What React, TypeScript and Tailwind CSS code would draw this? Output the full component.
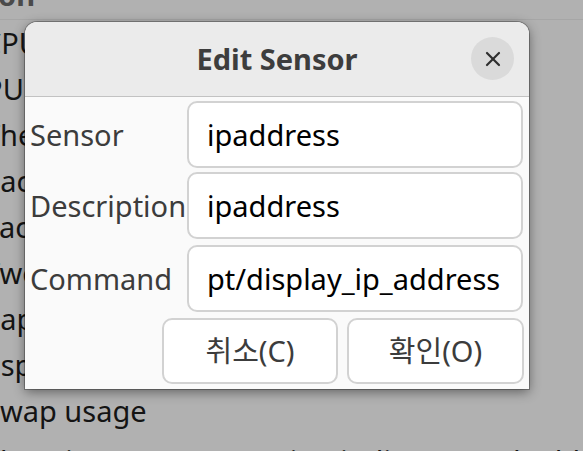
const rows = [
  { text: "CPU", cls: "-ml-[17px]" },
  { text: "GPU", cls: "-ml-[36px]" },
  { text: "Theme", cls: "-ml-[16px]" },
  { text: "Cache", cls: "-ml-[18px]" },
  { text: "Face", cls: "-ml-[16px]" },
  { text: "Two", cls: "-ml-[16px]" },
  { text: "Map", cls: "-ml-[26px]" },
  { text: "Disp", cls: "-ml-[28px]" },
  { text: "Swap usage", cls: "-ml-[16px]" },
  { text: "Show internet connection indicator and address", cls: "-ml-[16px] mt-[7px]" },
];

function Entry({ value }: { value: string }) {
  return (
    <div className="flex-1 h-full flex items-center rounded-[10px] border-2 border-[#d2d2d2] bg-white pl-[18px] pr-[12px] overflow-hidden">
      <span className="whitespace-nowrap text-black">{value}</span>
    </div>
  );
}

function FieldRow({ label, value, className }: { label: string; value: string; className?: string }) {
  return (
    <div className={`flex items-center h-[67px] ${className ?? ""}`}>
      <div className="w-[157px] shrink-0 text-[#3c3c3c] whitespace-nowrap">{label}</div>
      <Entry value={value} />
    </div>
  );
}

export default function App() {
  return (
    <div className="relative w-[583px] h-[451px] overflow-hidden bg-[#b1b1b1] text-[29px] font-['Noto_Sans','Noto_Sans_CJK_KR',sans-serif]">
      {/* background list behind the dialog */}
      <div className="h-[20px] border-b border-[#a6a6a6] overflow-hidden">
        <div className="w-[35px] flex justify-end -mt-[24px] leading-[38px]">
          <span className="font-bold text-[#4a4a4a] whitespace-nowrap">Description</span>
        </div>
      </div>
      {rows.map((r) => (
        <div key={r.text} className="h-[46px] flex items-center whitespace-nowrap text-[#141414]">
          <span className={r.cls}>{r.text}</span>
        </div>
      ))}

      {/* dialog */}
      <div className="absolute left-[25px] top-[22px] w-[504px] rounded-t-[12px] bg-[#fafafa] overflow-hidden shadow-[0_0_0_1px_rgba(0,0,0,0.28),0_3px_12px_rgba(0,0,0,0.45)]">
        <div className="relative h-[75px] bg-[#ebebeb] border-b border-[#c2c2c2] flex items-center justify-center">
          <span className="font-bold text-[#3d3d3d]">Edit Sensor</span>
          <button className="absolute right-[15px] top-[15px] w-[43px] h-[43px] rounded-full bg-[#dadada] flex items-center justify-center">
            <svg width="16" height="16" viewBox="0 0 16 16" fill="none" stroke="#2e2e2e" strokeWidth="2.2" strokeLinecap="round">
              <line x1="2" y1="2" x2="14" y2="14" />
              <line x1="14" y1="2" x2="2" y2="14" />
            </svg>
          </button>
        </div>

        <div className="flex flex-col pt-[4px] pb-[5px] pl-[5px] pr-[6px]">
          <FieldRow label="Sensor" value="ipaddress" />
          <FieldRow label="Description" value="ipaddress" className="mt-[4px]" />
          <FieldRow label="Command" value="pt/display_ip_address" className="mt-[6px]" />
          <div className="flex justify-end gap-[9px] h-[66px] mt-[6px] -mr-[1px]">
            <button className="w-[176px] h-full rounded-[10px] border-2 border-[#d2d2d2] bg-white text-[#3c3c3c]">
              취소(C)
            </button>
            <button className="w-[177px] h-full rounded-[10px] border-2 border-[#d2d2d2] bg-white text-[#3c3c3c]">
              확인(O)
            </button>
          </div>
        </div>
      </div>
    </div>
  );
}
